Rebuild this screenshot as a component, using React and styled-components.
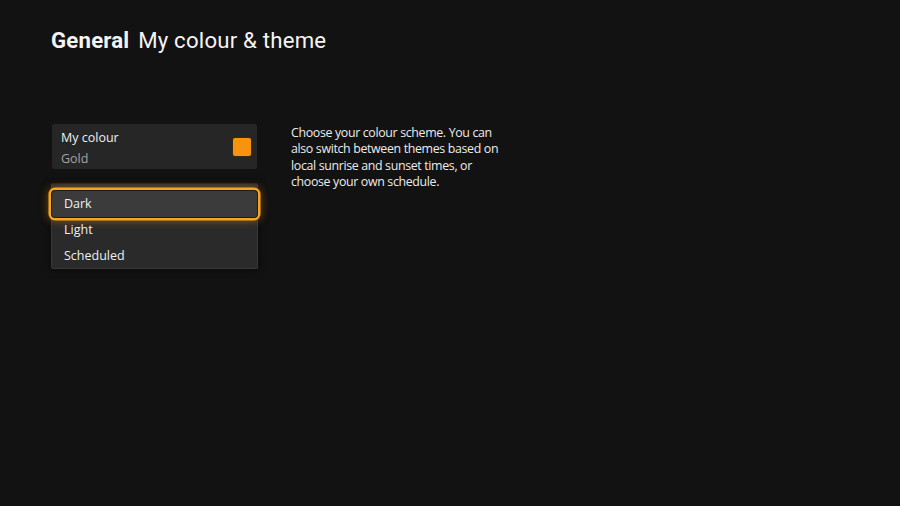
import { styled, createGlobalStyle } from "styled-components";

const GlobalStyle = createGlobalStyle`
  html, body {
    margin: 0;
    padding: 0;
    background: #121212;
  }
  body {
    font-family: "Open Sans", "Noto Sans", sans-serif;
    color: #f2f2f2;
  }
`;

const themes = ["Dark", "Light", "Scheduled"];

const App = () => {
  return (
    <Page>
      <GlobalStyle />
      <Title>
        <strong>General</strong> My colour &amp; theme
      </Title>
      <Content>
        <Column>
          <ColourCard>
            <div>
              <CardLabel>My colour</CardLabel>
              <CardValue>Gold</CardValue>
            </div>
            <Swatch color="#f7930e" />
          </ColourCard>
          <Menu>
            {themes.map((name, i) => (
              <MenuItem key={name} $focused={i === 0}>
                {name}
              </MenuItem>
            ))}
          </Menu>
        </Column>
        <Description>
          Choose your colour scheme. You can also switch between themes based on
          local sunrise and sunset times, or choose your own schedule.
        </Description>
      </Content>
    </Page>
  );
};

const Page = styled.div`
  width: 900px;
  height: 506px;
  box-sizing: border-box;
  padding: 26px 0 0 51px;
  background: #121212;
  overflow: hidden;
`;

const Title = styled.h1`
  margin: 0;
  font-family: "Roboto", "Noto Sans", sans-serif;
  font-size: 22.2px;
  font-weight: 400;
  line-height: 28px;
  color: #f4f4f4;
  letter-spacing: 0.2px;

  strong {
    font-weight: 700;
    margin-right: 3px;
  }
`;

const Content = styled.div`
  display: flex;
  align-items: flex-start;
  gap: 34px;
  margin-top: 70px;
  margin-left: 1px;
`;

const Column = styled.div`
  width: 205px;
  display: flex;
  flex-direction: column;
`;

const ColourCard = styled.div`
  height: 45px;
  box-sizing: border-box;
  padding: 4px 6px 0 9px;
  background: #262626;
  border-radius: 2px;
  display: flex;
  justify-content: space-between;
  align-items: center;
`;

const CardLabel = styled.div`
  font-size: 12.5px;
  line-height: 19px;
  color: #f0f0f0;
`;

const CardValue = styled.div`
  font-size: 12.5px;
  line-height: 21px;
  padding-top: 1px;
  color: #a3a3a3;
`;

const Swatch = styled.div`
  width: 18px;
  height: 18px;
  margin-top: -3px;
  background: ${(p) => p.color};
  border-radius: 2px;
  box-shadow: 0 0 0 1px #3a2a10;
`;

const Menu = styled.div`
  margin-top: 14px;
  padding-top: 7px;
  background: #2a2a2a;
  border: 1px solid #383838;
  border-top-color: #1f1f1f;
  border-radius: 2px;
  margin-left: -1px;
  margin-right: -1px;
  box-shadow: 0 0 8px rgba(0, 0, 0, 0.6);
`;

const MenuItem = styled.div`
  position: relative;
  height: 26px;
  padding-left: 12px;
  font-size: 12.5px;
  line-height: 26px;
  color: #f0f0f0;
  background: ${(p) => (p.$focused ? "#3b3b3b" : "transparent")};
  border-radius: ${(p) => (p.$focused ? "3px" : "0")};
  box-shadow: ${(p) =>
    p.$focused
      ? "0 0 0 1px #1c1c1c, 0 0 0 3.5px #f7a51c, 0 0 9px 4px rgba(247, 150, 20, 0.4)"
      : "none"};
  z-index: ${(p) => (p.$focused ? 1 : 0)};

  &:last-child {
    height: 25px;
  }
`;

const Description = styled.p`
  margin: 0;
  padding-top: 1px;
  width: 208px;
  font-size: 12.4px;
  letter-spacing: -0.35px;
  line-height: 16.3px;
  color: #ececec;
`;

export default App;
